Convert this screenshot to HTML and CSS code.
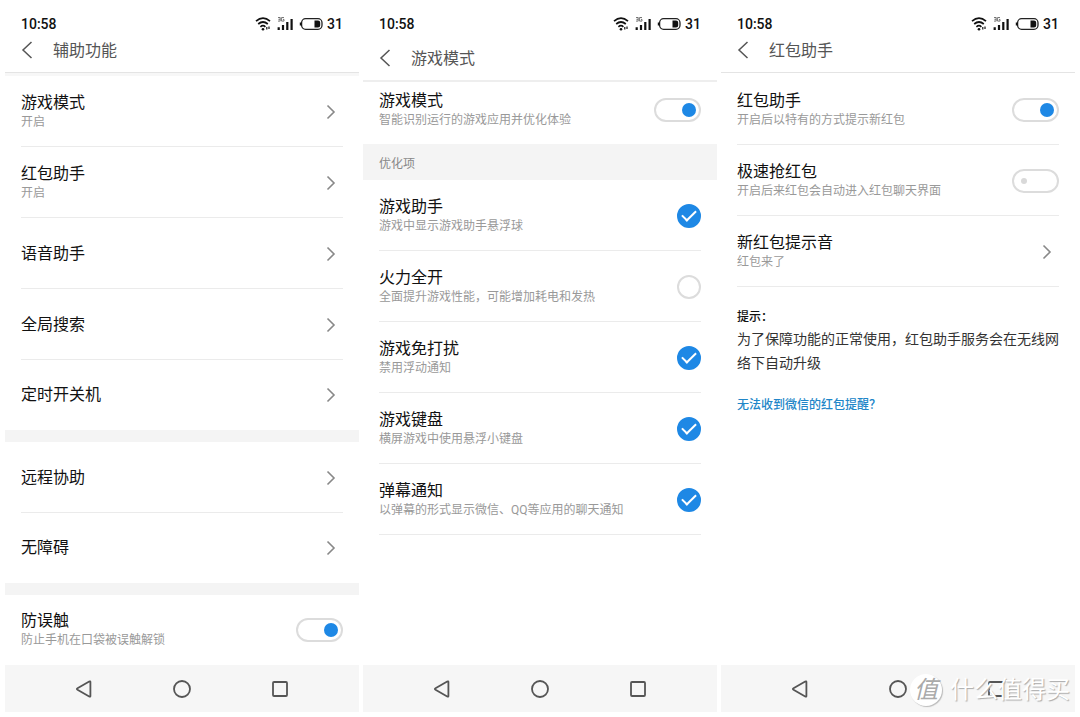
FILE: index.html
```html
<!DOCTYPE html>
<html lang="zh-CN">
<head>
<meta charset="utf-8">
<meta name="viewport" content="width=device-width, initial-scale=1">
<title>辅助功能</title>
<link rel="stylesheet" href="styles.css">
</head>
<body>
<svg class="defs" aria-hidden="true">
  <symbol id="status" viewBox="0 0 68 16">
    <g fill="none" stroke="#111" stroke-width="1.7">
      <path d="M1 5.2Q8 -0.8 15 5.2"/>
      <path d="M3.2 8Q8 4 12.8 8"/>
      <path d="M5.4 10.800Q8 8.600 10.400 10.800"/>
    </g>
    <circle cx="8" cy="13.200" r="1.300" fill="#111"/>
    <path d="M11.800 11v2.500M14 10.500v2.500" stroke="#111" stroke-width="1.200"/>
    <path d="M23 1.500h2.200v3.600H23M23.400 3.300h1.800M29 1.500h-2.400v3.600H29V3.400h-1" fill="none" stroke="#555" stroke-width=".8"/>
    <path d="M22.600 11.300h2.200V14h-2.200zM26.900 9h2.200v5h-2.200zM31.200 6h2.200v8h-2.200zM35.500 3h2.200v11h-2.200z" fill="#111"/>
    <rect x="46.600" y="2.700" width="20.400" height="10.600" rx="4" fill="none" stroke="#222" stroke-width="1.300"/>
    <path d="M44.800 6.400h1.800v3.200h-1.800zM59.500 4.600h3.500q2.200 0 2.200 2v2.800q0 2-2.200 2h-3.500z" fill="#111"/>
  </symbol>
  <symbol id="back" viewBox="0 0 12 18"><path d="M10.500 1L2 9l8.500 8" fill="none" stroke="#555" stroke-width="1.500"/></symbol>
  <symbol id="next" viewBox="0 0 10 16"><path d="M1.500 1.500L8 8l-6.500 6.500" fill="none" stroke="#888" stroke-width="1.600"/></symbol>
  <symbol id="nav-back" viewBox="0 0 20 20"><path d="M3.500 9.200L15.200 2.500q1.200-.6 1.200.6v13.800q0 1.200-1.200.6L3.500 10.800q-1.300-.8 0-1.600z" fill="none" stroke="#555" stroke-width="1.800"/></symbol>
  <symbol id="nav-home" viewBox="0 0 20 20"><circle cx="10" cy="10" r="8" fill="none" stroke="#555" stroke-width="1.800"/></symbol>
  <symbol id="nav-recent" viewBox="0 0 20 20"><rect x="3" y="3" width="14" height="14" rx="1" fill="none" stroke="#555" stroke-width="1.800"/></symbol>
</svg>

<main class="screens">
  <section class="phone">
    <div class="status"><span>10:58</span><svg class="status-icons"><use href="#status"/></svg><span>31</span></div>
    <header class="bar bar-shadow"><button class="back" aria-label="返回"><svg><use href="#back"/></svg></button><h1>辅助功能</h1></header>
    <div class="list">
      <button class="row"><span class="label"><span class="title">游戏模式</span><span class="sub">开启</span></span><svg class="next"><use href="#next"/></svg></button>
      <button class="row"><span class="label"><span class="title">红包助手</span><span class="sub">开启</span></span><svg class="next"><use href="#next"/></svg></button>
      <button class="row"><span class="title">语音助手</span><svg class="next"><use href="#next"/></svg></button>
      <button class="row"><span class="title">全局搜索</span><svg class="next"><use href="#next"/></svg></button>
      <button class="row row-last"><span class="title">定时开关机</span><svg class="next"><use href="#next"/></svg></button>
      <div class="band"></div>
      <button class="row"><span class="title">远程协助</span><svg class="next"><use href="#next"/></svg></button>
      <button class="row row-last"><span class="title">无障碍</span><svg class="next"><use href="#next"/></svg></button>
      <div class="band"></div>
      <label class="row row-last"><span class="label"><span class="title">防误触</span><span class="sub">防止手机在口袋被误触解锁</span></span><input class="switch" type="checkbox" checked></label>
    </div>
    <nav class="nav"><button aria-label="返回"><svg><use href="#nav-back"/></svg></button><button aria-label="主页"><svg><use href="#nav-home"/></svg></button><button aria-label="最近任务"><svg><use href="#nav-recent"/></svg></button></nav>
  </section>

  <section class="phone">
    <div class="status"><span>10:58</span><svg class="status-icons"><use href="#status"/></svg><span>31</span></div>
    <header class="bar bar-tall"><button class="back" aria-label="返回"><svg><use href="#back"/></svg></button><h1>游戏模式</h1></header>
    <div class="list">
      <label class="row row-short"><span class="label"><span class="title">游戏模式</span><span class="sub">智能识别运行的游戏应用并优化体验</span></span><input class="switch" type="checkbox" checked></label>
      <h2 class="group">优化项</h2>
      <label class="row"><span class="label"><span class="title">游戏助手</span><span class="sub">游戏中显示游戏助手悬浮球</span></span><input class="check" type="checkbox" checked></label>
      <label class="row"><span class="label"><span class="title">火力全开</span><span class="sub">全面提升游戏性能，可能增加耗电和发热</span></span><input class="check" type="checkbox"></label>
      <label class="row"><span class="label"><span class="title">游戏免打扰</span><span class="sub">禁用浮动通知</span></span><input class="check" type="checkbox" checked></label>
      <label class="row"><span class="label"><span class="title">游戏键盘</span><span class="sub">横屏游戏中使用悬浮小键盘</span></span><input class="check" type="checkbox" checked></label>
      <label class="row"><span class="label"><span class="title">弹幕通知</span><span class="sub">以弹幕的形式显示微信、QQ等应用的聊天通知</span></span><input class="check" type="checkbox" checked></label>
    </div>
    <nav class="nav"><button aria-label="返回"><svg><use href="#nav-back"/></svg></button><button aria-label="主页"><svg><use href="#nav-home"/></svg></button><button aria-label="最近任务"><svg><use href="#nav-recent"/></svg></button></nav>
  </section>

  <section class="phone">
    <div class="status"><span>10:58</span><svg class="status-icons"><use href="#status"/></svg><span>31</span></div>
    <header class="bar bar-spaced"><button class="back" aria-label="返回"><svg><use href="#back"/></svg></button><h1>红包助手</h1></header>
    <div class="list">
      <label class="row"><span class="label"><span class="title">红包助手</span><span class="sub">开启后以特有的方式提示新红包</span></span><input class="switch" type="checkbox" checked></label>
      <label class="row"><span class="label"><span class="title">极速抢红包</span><span class="sub">开启后来红包会自动进入红包聊天界面</span></span><input class="switch" type="checkbox"></label>
      <button class="row"><span class="label"><span class="title">新红包提示音</span><span class="sub">红包来了</span></span><svg class="next"><use href="#next"/></svg></button>
      <div class="tips">
        <h2>提示：</h2>
        <p>为了保障功能的正常使用，红包助手服务会在无线网络下自动升级</p>
        <a href="#help">无法收到微信的红包提醒？</a>
      </div>
    </div>
    <nav class="nav"><button aria-label="返回"><svg><use href="#nav-back"/></svg></button><button aria-label="主页"><svg><use href="#nav-home"/></svg></button><button aria-label="最近任务"><svg><use href="#nav-recent"/></svg></button></nav>
    <div class="watermark"><span class="seal">值</span><span>什么值得买</span></div>
  </section>
</main>
</body>
</html>
```

FILE: styles.css
```css
* { box-sizing: border-box; }
body {
  margin: 0;
  background: #fff;
  color: #111;
  font-family: Roboto, "Noto Sans CJK SC", sans-serif;
}
button {
  margin: 0;
  padding: 0;
  border: 0;
  background: none;
  color: inherit;
  font: inherit;
  text-align: left;
  cursor: pointer;
}
svg { display: block; }
.defs { display: none; }
h1, h2, p { margin: 0; }

.screens {
  display: grid;
  grid-template-columns: repeat(3, minmax(0, 1fr));
  gap: 4px;
  min-height: 100vh;
  padding: 0 5px 5px;
}
.phone {
  position: relative;
  display: flex;
  flex-direction: column;
}

.status {
  display: flex;
  align-items: center;
  gap: 4px;
  padding: 14px 16px 0;
  font-size: 14px;
  font-weight: 500;
  line-height: 20px;
}
.status-icons {
  width: 68px;
  height: 16px;
  margin-left: auto;
}

.bar {
  display: flex;
  align-items: center;
  gap: 20px;
  padding: 0 16px 6px;
  border-bottom: 1px solid #e4e4e4;
}
.bar-shadow { box-shadow: 0 3px 0 #f7f7f7; margin-bottom: 3px; }
.bar-spaced { margin-bottom: 1px; }
.bar-tall { padding: 8px 16px 6px; border-bottom: 2px solid #eee; }
.bar h1 {
  padding-top: 2px;
  color: #555;
  font-size: 16px;
  font-weight: 400;
  line-height: 30px;
}
.back svg { width: 12px; height: 18px; }

.list { flex: 1; }
.row {
  position: relative;
  display: flex;
  align-items: center;
  justify-content: space-between;
  width: 100%;
  min-height: 71px;
  padding: 0 16px;
}
.row::after {
  content: "";
  position: absolute;
  right: 16px;
  bottom: 0;
  left: 16px;
  height: 1px;
  background: #ebebeb;
}
.row-last { min-height: 70px; }
.row-short { min-height: 62px; padding-bottom: 7px; }
.row-last::after, .row-short::after { display: none; }
.label { display: flex; flex-direction: column; }
.title { font-size: 16px; line-height: 20px; }
.sub { color: #999; font-size: 12px; line-height: 18px; }
.next { width: 10px; height: 16px; margin-right: 7px; }
.band { height: 12px; background: #f4f4f4; }
.group {
  padding: 4px 16px 0;
  background: #f4f4f4;
  color: #888;
  font-size: 12px;
  font-weight: 400;
  line-height: 32px;
}

.switch, .check {
  display: flex;
  align-items: center;
  flex: none;
  height: 24px;
  margin: 0;
  border: 2px solid #dcdcdc;
  border-radius: 12px;
  background: #fff;
  appearance: none;
}
.switch { width: 47px; padding: 0 7px; }
.switch::before {
  content: "";
  width: 6px;
  height: 6px;
  border-radius: 50%;
  background: #d9d9d9;
}
.switch:checked { justify-content: flex-end; padding: 0 3px; }
.switch:checked::before { width: 14px; height: 14px; background: #1e88e5; }
.check { justify-content: center; width: 24px; }
.check:checked { border-color: #1e88e5; background: #1e88e5; }
.check:checked::before {
  content: "";
  width: 12px;
  height: 6px;
  margin-bottom: 4px;
  border: solid #fff;
  border-width: 0 0 2px 2px;
  transform: rotate(-45deg);
}

.tips { padding: 20px 14px 0 16px; }
.tips h2 { font-size: 12px; font-weight: 500; line-height: 20px; }
.tips p { color: #333; font-size: 14px; line-height: 24px; }
.tips a {
  display: inline-block;
  margin-top: 18px;
  color: #2186c8;
  font-size: 12px;
  font-weight: 500;
  line-height: 24px;
  text-decoration: none;
}

.nav {
  display: flex;
  align-items: center;
  justify-content: center;
  gap: 78px;
  height: 47px;
  background: #f6f6f6;
}
.nav svg { width: 20px; height: 20px; }

.watermark {
  position: absolute;
  right: 5px;
  bottom: 6px;
  display: flex;
  align-items: center;
  gap: 8px;
  color: #fff;
  font-size: 24px;
  line-height: 32px;
  text-shadow: 1px 1px 1px #aaa;
  white-space: nowrap;
  pointer-events: none;
}
.seal {
  width: 32px;
  height: 32px;
  border-radius: 50%;
  background: #fff;
  box-shadow: 1px 1px 1px #bbb;
  color: #aaa;
  font-style: italic;
  text-align: center;
  text-shadow: none;
}
```
